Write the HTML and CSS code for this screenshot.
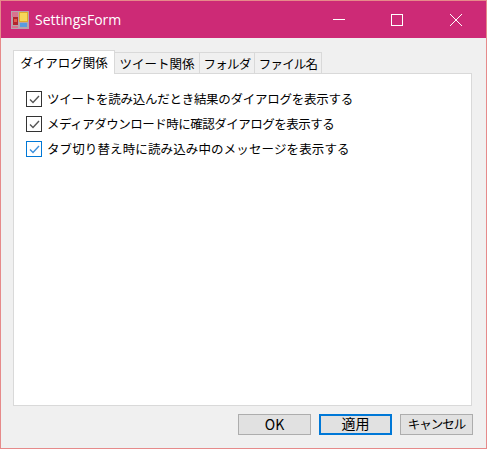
FILE: index.html
```html
<!DOCTYPE html>
<html lang="ja">
<head>
    <meta charset="UTF-8">
    <title>SettingsForm</title>
    <link rel="stylesheet" href="styles.css">
</head>
<body>
    <div class="window">
        <div class="titlebar">
            <svg class="app-icon" width="18" height="18" viewBox="0 0 18 18">
                <rect x="0" y="0" width="18" height="18" fill="#b5a3ac"/>
                <rect x="1" y="1" width="6" height="5" fill="#d9748f"/>
                <rect x="8" y="1" width="9" height="10" fill="#e0a92c"/>
                <rect x="9" y="2" width="7" height="8" fill="#f7d65a"/>
                <rect x="2" y="6" width="5" height="8" fill="#b3262e"/>
                <rect x="3" y="8" width="3" height="3" fill="#e25a4d"/>
                <rect x="9" y="12" width="7" height="4" fill="#5a9be0"/>
                <rect x="1" y="15" width="6" height="2" fill="#d9748f"/>
            </svg>
            <span class="title">SettingsForm</span>
            <div class="controls">
                <div class="control"><span class="minimize"></span></div>
                <div class="control"><span class="maximize"></span></div>
                <div class="control">
                    <svg width="12" height="12" viewBox="0 0 12 12">
                        <path d="M0 0L12 12M12 0L0 12" stroke="#fff" stroke-width="1" fill="none"/>
                    </svg>
                </div>
            </div>
        </div>
        <div class="content">
            <div class="tabs">
                <div class="tab active">ダイアログ関係</div>
                <div class="tab tab-tweet">ツイート関係</div>
                <div class="tab tab-folder">フォルダ</div>
                <div class="tab tab-file">ファイル名</div>
            </div>
            <div class="panel">
                <div class="option">
                    <span class="checkbox">
                        <svg width="11" height="9" viewBox="0 0 11 9"><path d="M1 4.5L4 7.5L10 1" stroke="#555" stroke-width="1.4" fill="none"/></svg>
                    </span>
                    <span class="label label-tweet">ツイートを読み込んだとき結果のダイアログを表示する</span>
                </div>
                <div class="option">
                    <span class="checkbox">
                        <svg width="11" height="9" viewBox="0 0 11 9"><path d="M1 4.5L4 7.5L10 1" stroke="#555" stroke-width="1.4" fill="none"/></svg>
                    </span>
                    <span class="label label-media">メディアダウンロード時に確認ダイアログを表示する</span>
                </div>
                <div class="option">
                    <span class="checkbox focused">
                        <svg width="11" height="9" viewBox="0 0 11 9"><path d="M1 4.5L4 7.5L10 1" stroke="#3d8fdc" stroke-width="1.4" fill="none"/></svg>
                    </span>
                    <span class="label label-tab">タブ切り替え時に読み込み中のメッセージを表示する</span>
                </div>
            </div>
            <div class="buttons">
                <button class="btn btn-large">OK</button>
                <button class="btn btn-large default">適用</button>
                <button class="btn btn-cancel">キャンセル</button>
            </div>
        </div>
    </div>
</body>
</html>
```

FILE: styles.css
```css
* {
    margin: 0;
    padding: 0;
    box-sizing: border-box;
}

html, body {
    width: 487px;
    height: 449px;
    overflow: hidden;
}

body {
    font-family: "Noto Sans CJK JP", "Liberation Sans", sans-serif;
    font-size: 12.5px;
    color: #000;
}

.window {
    width: 487px;
    height: 449px;
    display: flex;
    flex-direction: column;
    border: 1px solid #e68a8a;
    background-color: #f0f0f0;
}

.titlebar {
    height: 37px;
    flex-shrink: 0;
    display: flex;
    align-items: center;
    padding-left: 10px;
    background-color: #cd2a76;
    color: #fff;
}

.app-icon {
    flex-shrink: 0;
}

.title {
    margin-left: 6px;
    font-family: "Open Sans", "Liberation Sans", sans-serif;
    font-size: 14px;
}

.controls {
    display: flex;
    margin-left: auto;
    padding-right: 1px;
    height: 100%;
}

.control {
    width: 58.5px;
    display: flex;
    align-items: center;
    justify-content: center;
}

.minimize {
    display: block;
    width: 12px;
    height: 1px;
    background-color: #fff;
}

.maximize {
    display: block;
    width: 12px;
    height: 12px;
    border: 1px solid #fff;
}

.content {
    flex: 1;
    display: flex;
    flex-direction: column;
    padding: 12px 14px 0 12px;
}

.tabs {
    display: flex;
    align-items: flex-end;
    height: 24px;
    position: relative;
    z-index: 1;
    margin-bottom: -1px;
}

.tab {
    height: 22px;
    line-height: 21px;
    text-align: center;
    white-space: nowrap;
    background-color: #f0f0f0;
    border: 1px solid #d9d9d9;
    border-left: none;
}

.tab.active {
    width: 102px;
    height: 24px;
    line-height: 23px;
    background-color: #fff;
    border-left: 1px solid #d9d9d9;
    border-bottom: none;
}

.tab-tweet {
    width: 85px;
}

.tab-folder {
    width: 55px;
    letter-spacing: -0.8px;
}

.tab-file {
    width: 67px;
    letter-spacing: -0.8px;
}

.panel {
    height: 333px;
    background-color: #fff;
    border: 1px solid #d9d9d9;
    padding-top: 17px;
    padding-left: 12px;
    display: flex;
    flex-direction: column;
    gap: 9px;
}

.option {
    display: flex;
    align-items: center;
    gap: 5px;
    height: 16px;
    white-space: nowrap;
}

.label {
    padding-bottom: 2px;
}

.label-tweet {
    letter-spacing: -0.26px;
}

.label-media {
    letter-spacing: -0.5px;
}

.label-tab {
    letter-spacing: 0.12px;
}

.checkbox {
    width: 16px;
    height: 16px;
    flex-shrink: 0;
    display: flex;
    align-items: center;
    justify-content: center;
    background-color: #fff;
    border: 1px solid #333;
}

.checkbox.focused {
    border-color: #0078d7;
}

.buttons {
    display: flex;
    justify-content: flex-end;
    gap: 8px;
    margin-top: 8px;
    margin-right: -1px;
}

.btn {
    width: 73px;
    height: 21px;
    font-family: inherit;
    font-size: 12.5px;
    line-height: 16px;
    padding-bottom: 2px;
    background-color: #e1e1e1;
    border: 1px solid #adadad;
    color: #000;
}

.btn-large {
    font-size: 14px;
}

.btn-cancel {
    letter-spacing: -1px;
}

.btn.default {
    border: 2px solid #0078d7;
    line-height: 15px;
}
```
